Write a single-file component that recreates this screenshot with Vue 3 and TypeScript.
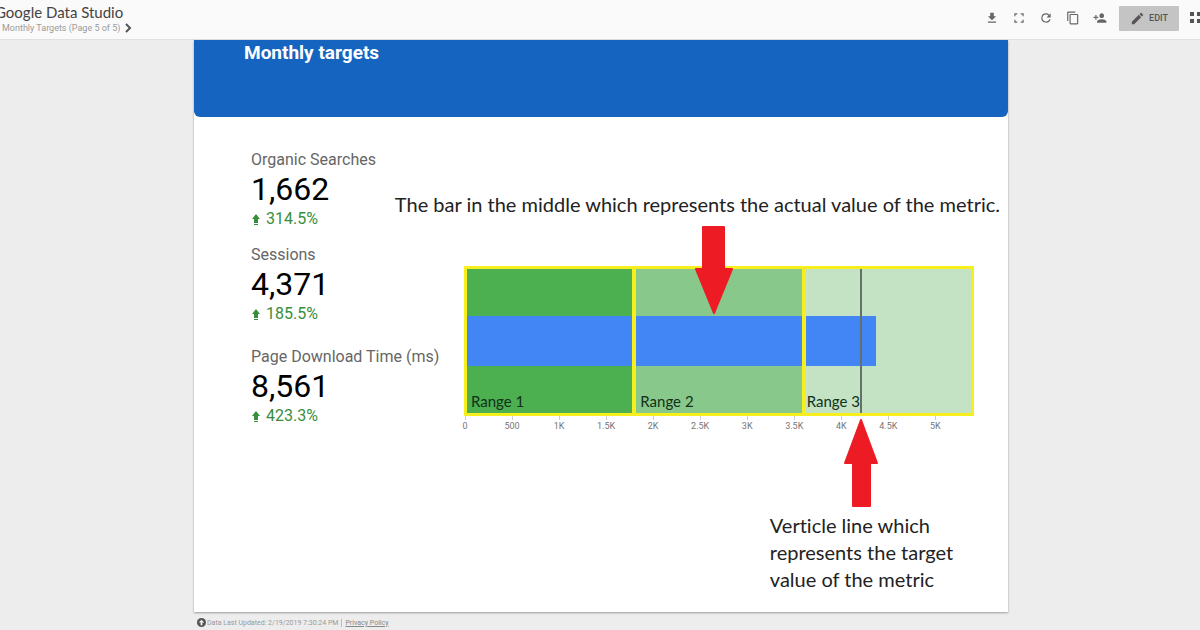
<script setup lang="ts">
interface Kpi {
  label: string
  value: string
  change: string
}

interface Tick {
  value: number
  label: string
}

interface Action {
  label: string
  path: string
}

const kpis: Kpi[] = [
  { label: 'Organic Searches', value: '1,662', change: '314.5%' },
  { label: 'Sessions', value: '4,371', change: '185.5%' },
  { label: 'Page Download Time (ms)', value: '8,561', change: '423.3%' },
]

const actions: Action[] = [
  { label: 'Download report', path: 'M19 9h-4V3H9v6H5l7 7 7-7zM5 18v2h14v-2H5z' },
  { label: 'Full screen', path: 'M4 9V4h5v2H6v3zM15 4h5v5h-2V6h-3zM4 15h2v3h3v2H4zM18 15h2v5h-5v-2h3z' },
  {
    label: 'Refresh data',
    path: 'M17.65 6.35A7.96 7.96 0 0 0 12 4a8 8 0 1 0 7.73 10h-2.08A6 6 0 1 1 12 6c1.66 0 3.14.69 4.22 1.78L13 11h7V4l-2.35 2.35z',
  },
  {
    label: 'Make a copy',
    path: 'M16 1H4c-1.1 0-2 .9-2 2v14h2V3h12V1zm3 4H8c-1.1 0-2 .9-2 2v14c0 1.1.9 2 2 2h11c1.1 0 2-.9 2-2V7c0-1.1-.9-2-2-2zm0 16H8V7h11v14z',
  },
  {
    label: 'Share',
    path: 'M15 12c2.21 0 4-1.79 4-4s-1.79-4-4-4-4 1.79-4 4 1.79 4 4 4zm-9-2V7H4v3H1v2h3v3h2v-3h3v-2H6zm9 4c-2.67 0-8 1.34-8 4v2h16v-2c0-2.66-5.33-4-8-4z',
  },
]

const axisMax = 5400
const actual = 4371
const target = 4200
const ranges = ['Range 1', 'Range 2', 'Range 3']
const ticks: Tick[] = Array.from({ length: 11 }, (_, i) => {
  const value = i * 500
  return { value, label: value < 1000 ? String(value) : `${value / 1000}K` }
})

const percent = (value: number): string => `${(value / axisMax) * 100}%`
</script>

<template>
  <div class="app">
    <header class="toolbar">
      <div class="heading">
        <h1 class="product">Google Data Studio</h1>
        <div class="pager">
          <span>Monthly Targets (Page 5 of 5)</span>
          <button class="next" type="button" aria-label="Next page">
            <svg viewBox="0 0 8 10"><path d="M2 1l4 4-4 4" /></svg>
          </button>
        </div>
      </div>
      <div class="actions">
        <button v-for="action in actions" :key="action.label" class="icon" type="button" :aria-label="action.label">
          <svg viewBox="0 0 24 24"><path :d="action.path" /></svg>
        </button>
      </div>
      <button class="edit" type="button">
        <svg viewBox="0 0 24 24">
          <path d="M3 17.25V21h3.75L17.81 9.94l-3.75-3.75L3 17.25zM20.71 7.04a1 1 0 0 0 0-1.41l-2.34-2.34a1 1 0 0 0-1.41 0l-1.83 1.83 3.75 3.75 1.83-1.83z" />
        </svg>
        <span>EDIT</span>
      </button>
      <button class="apps" type="button" aria-label="Apps">
        <svg viewBox="0 0 20 12">
          <path d="M0 0h4v4H0zM7 0h4v4H7zM14 0h4v4h-4zM0 7h4v4H0zM7 7h4v4H7zM14 7h4v4h-4z" />
        </svg>
      </button>
    </header>

    <main class="report">
      <div class="banner"><h2>Monthly targets</h2></div>
      <div class="content">
        <section class="kpis">
          <div v-for="kpi in kpis" :key="kpi.label" class="kpi">
            <div class="kpi-label">{{ kpi.label }}</div>
            <div class="kpi-value">{{ kpi.value }}</div>
            <div class="kpi-change">
              <svg viewBox="0 0 8 12"><path d="M4 0l4 5H6v3H2V5H0zM2 8h4v1H2zM2 10h4v1H2z" /></svg>
              <span>{{ kpi.change }}</span>
            </div>
          </div>
        </section>

        <section class="chart">
          <div class="plot">
            <div class="bands"><div v-for="range in ranges" :key="range" class="band"></div></div>
            <div class="bar" :style="{ width: percent(actual) }"></div>
            <div class="frames">
              <div v-for="range in ranges" :key="range" class="frame">{{ range }}</div>
            </div>
            <div class="target" :style="{ left: percent(target) }"></div>
            <svg class="arrow-down" viewBox="0 0 40 88">
              <path d="M9 1h21v42h8L20 87 2 43h7z" />
            </svg>
            <svg class="arrow-up" viewBox="0 0 34 88" :style="{ left: percent(target) }">
              <path d="M17 1l16 43h-7v43H9V44H1z" />
            </svg>
            <p class="note note-bar">The bar in the middle which represents the actual value of the metric.</p>
            <p class="note note-target">Verticle line which represents the target value of the metric</p>
          </div>
          <div class="axis">
            <span v-for="tick in ticks" :key="tick.value" class="tick" :style="{ left: percent(tick.value) }">{{ tick.label }}</span>
          </div>
        </section>
      </div>
    </main>

    <footer class="status">
      <svg viewBox="0 0 10 10">
        <circle cx="5" cy="5" r="5" />
        <path d="M5 2L2 5h2v3h2V5h2z" />
      </svg>
      <span>Data Last Updated: 2/19/2019 7:30:24 PM</span>
      <i class="divider"></i>
      <a href="#privacy">Privacy Policy</a>
    </footer>
  </div>
</template>

<style>
body {
  margin: 0;
  background: #ededed;
}
</style>

<style scoped>
.app {
  display: flex;
  flex-direction: column;
  min-height: 100vh;
  overflow: hidden;
  font-family: Roboto, sans-serif;
  background: #ededed;
}
h1, h2, p {
  margin: 0;
  font-weight: 400;
}
button {
  padding: 0;
  border: 0;
  background: none;
  font-family: inherit;
}
svg {
  display: block;
}
.toolbar {
  display: flex;
  align-items: center;
  box-sizing: border-box;
  height: 40px;
  padding-bottom: 3px;
  border-bottom: 1px solid #e0e0e0;
  background: #fafafa;
}
.heading {
  flex: 1;
}
.product {
  margin-left: -5px;
  font-family: Lato, sans-serif;
  font-size: 15px;
  line-height: 20px;
  color: #444;
}
.pager {
  display: flex;
  align-items: center;
  gap: 4px;
  padding-left: 2px;
  font-size: 9px;
  line-height: 12px;
  color: #9a9a9a;
}
.next svg {
  width: 8px;
  height: 10px;
  fill: none;
  stroke: #555;
  stroke-width: 2;
}
.actions {
  display: flex;
  gap: 13px;
  margin-right: 12px;
}
.icon svg {
  width: 14px;
  height: 14px;
  fill: #666;
}
.edit {
  display: flex;
  align-items: center;
  justify-content: center;
  gap: 4px;
  width: 60px;
  height: 25px;
  margin-right: 11px;
  border-radius: 1px;
  background: #c4c4c4;
  color: #555;
  font-size: 9px;
  font-weight: 500;
}
.edit svg {
  width: 15px;
  height: 15px;
  fill: #555;
}
.apps {
  flex: none;
  width: 10px;
  overflow: hidden;
}
.apps svg {
  width: 20px;
  height: 12px;
  fill: #555;
}
.report {
  flex: 1;
  display: flex;
  flex-direction: column;
  margin: 0 192px 0 194px;
  background: #fff;
  box-shadow: 0 1px 2px rgba(0, 0, 0, 0.35);
}
.banner {
  height: 77px;
  padding-left: 50px;
  border-radius: 0 0 6px 6px;
  background: #1565c0;
}
.banner h2 {
  color: #fff;
  font-size: 19px;
  font-weight: 700;
  line-height: 26px;
}
.content {
  display: grid;
  grid-template-columns: 214px 1fr;
  padding: 33px 35px 0 57px;
}
.kpi + .kpi {
  margin-top: 15px;
}
.kpi:last-child {
  margin-top: 22px;
}
.kpi-label {
  color: #666;
  font-size: 16px;
  line-height: 20px;
  white-space: nowrap;
}
.kpi-value {
  color: #000;
  font-size: 32px;
  line-height: 38px;
}
.kpi-change {
  display: flex;
  align-items: center;
  gap: 6px;
  padding-left: 1px;
  color: #388e3c;
  font-size: 16px;
  line-height: 22px;
}
.kpi-change svg {
  width: 8px;
  height: 12px;
  margin-top: 2px;
  fill: #388e3c;
}
.chart {
  padding-top: 117px;
}
.plot {
  position: relative;
  height: 148px;
}
.bands,
.frames {
  position: absolute;
  inset: 0;
  display: grid;
  grid-template-columns: repeat(3, 1fr);
}
.band:nth-child(1) {
  background: #4caf50;
}
.band:nth-child(2) {
  background: #88c98b;
}
.band:nth-child(3) {
  background: #c3e3c4;
}
.frame {
  display: flex;
  align-items: flex-end;
  padding: 0 0 4px 6px;
  outline: 3px solid #f7ee1e;
  outline-offset: -2px;
  color: #12301a;
  font-family: Lato, sans-serif;
  font-size: 15px;
  line-height: 20px;
}
.frame:last-child {
  padding-left: 3px;
}
.bar {
  position: absolute;
  top: 33%;
  left: 0;
  height: 50px;
  background: #4285f4;
}
.target {
  position: absolute;
  top: 2px;
  bottom: 2px;
  width: 2px;
  background: #66706a;
}
.arrow-down,
.arrow-up {
  position: absolute;
  fill: #ed1c24;
  stroke: #ed1c24;
  stroke-width: 2;
  stroke-linejoin: round;
}
.arrow-down {
  top: -41px;
  left: 45%;
  width: 40px;
  height: 88px;
}
.arrow-up {
  top: 152px;
  width: 34px;
  height: 88px;
  margin-left: -16px;
}
.note {
  position: absolute;
  color: #222;
  font-family: Lato, sans-serif;
  font-size: 20px;
  font-variant-ligatures: none;
  line-height: 27px;
}
.note-bar {
  top: -76px;
  right: -27px;
  white-space: nowrap;
}
.note-target {
  top: 245px;
  left: 60%;
  width: 200px;
}
.axis {
  position: relative;
  height: 20px;
}
.tick {
  position: absolute;
  top: 1px;
  display: flex;
  flex-direction: column;
  align-items: center;
  width: 40px;
  margin-left: -20px;
  color: #757575;
  font-size: 9px;
  line-height: 13px;
}
.tick::before {
  width: 1px;
  height: 4px;
  background: #ccc;
  content: '';
}
.status {
  display: flex;
  align-items: center;
  height: 18px;
  padding: 3px 0 0 197px;
  box-sizing: border-box;
  color: #999;
  font-size: 7px;
}
.status svg {
  width: 9px;
  height: 9px;
  margin-right: 1px;
  fill: #555;
}
.status svg path {
  fill: #ededed;
}
.divider {
  width: 1px;
  height: 8px;
  margin: 0 3px;
  background: #bbb;
}
.status a {
  color: #888;
}
</style>
